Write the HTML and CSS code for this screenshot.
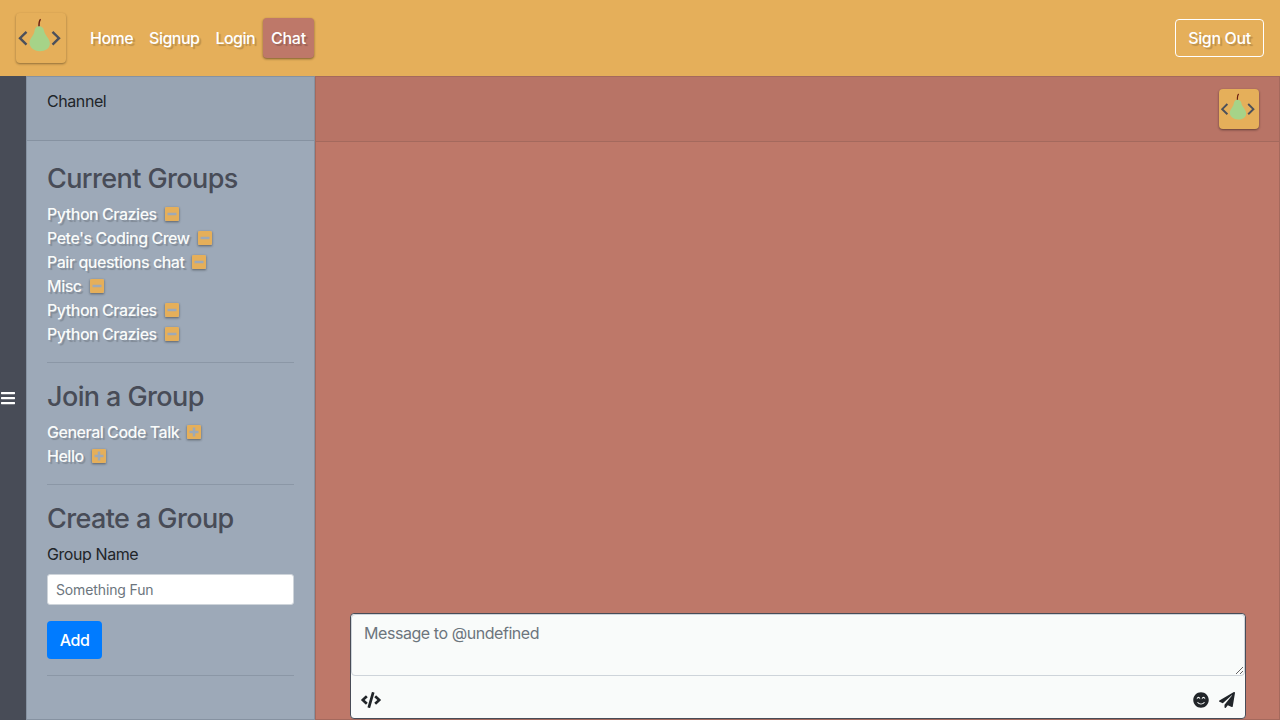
FILE: index.html
```html
<!DOCTYPE html>
<html lang="en">
<head>
<meta charset="utf-8">
<title>Pair Chat</title>
<link rel="stylesheet" href="styles.css">
</head>
<body>
<svg class="defs" aria-hidden="true">
  <symbol id="pear" viewBox="0 0 50 50">
    <path d="M23 13.8C22.9 10.600 23 7.600 24.600 6.200" fill="none" stroke="#6b1f12" stroke-width="1.500"/>
    <path d="M23.200 13.300C25.700 13.300 27.600 14.800 28.100 18C28.700 22.200 33.900 25.500 33.900 30.500C33.900 35.500 29.200 38.200 23.700 38.200C18.200 38.200 13.500 34.600 13.500 29.800C13.500 25.500 17.900 22.500 18.400 18.500C18.800 15.200 20.500 13.300 23.200 13.300Z" fill="#a6d388"/>
    <path d="M10.500 18.800L4 25.200L10.500 31.600M36.500 18.800L43 25.200L36.500 31.600" fill="none" stroke="#4c505b" stroke-width="2.400"/>
  </symbol>
  <symbol id="minus" viewBox="0 32 448 448"><path d="M400 32H48C21.500 32 0 53.500 0 80v352c0 26.500 21.500 48 48 48h352c26.500 0 48-21.500 48-48V80c0-26.500-21.500-48-48-48zM92 296c-6.600 0-12-5.400-12-12v-56c0-6.600 5.400-12 12-12h264c6.600 0 12 5.400 12 12v56c0 6.600-5.400 12-12 12H92z"/></symbol>
  <symbol id="plus" viewBox="0 32 448 448"><path d="M400 32H48C21.500 32 0 53.500 0 80v352c0 26.500 21.500 48 48 48h352c26.500 0 48-21.500 48-48V80c0-26.500-21.500-48-48-48zm-32 252c0 6.600-5.400 12-12 12h-92v92c0 6.600-5.400 12-12 12h-56c-6.600 0-12-5.400-12-12v-92H92c-6.600 0-12-5.400-12-12v-56c0-6.600 5.400-12 12-12h92v-92c0-6.600 5.400-12 12-12h56c6.600 0 12 5.400 12 12v92h92c6.600 0 12 5.400 12 12v56z"/></symbol>
</svg>
<header class="navbar">
  <svg class="brand"><use href="#pear"/></svg>
  <nav class="nav">
    <a class="nav-link">Home</a>
    <a class="nav-link">Signup</a>
    <a class="nav-link">Login</a>
    <a class="nav-link active">Chat</a>
  </nav>
  <button class="sign-out">Sign Out</button>
</header>
<main class="main">
  <aside class="rail">
    <svg class="bars" viewBox="0 0 448 512"><path d="M16 132h416c8.800 0 16-7.200 16-16V76c0-8.800-7.200-16-16-16H16C7.200 60 0 67.200 0 76v40c0 8.800 7.200 16 16 16zm0 160h416c8.800 0 16-7.200 16-16v-40c0-8.800-7.200-16-16-16H16c-8.800 0-16 7.200-16 16v40c0 8.800 7.200 16 16 16zm0 160h416c8.800 0 16-7.200 16-16v-40c0-8.800-7.200-16-16-16H16c-8.800 0-16 7.200-16 16v40c0 8.800 7.200 16 16 16z"/></svg>
  </aside>
  <section class="side">
    <div class="side-head">Channel</div>
    <div class="side-body">
      <h3 class="title">Current Groups</h3>
      <ul class="groups">
        <li class="group"><span class="name">Python Crazies</span><svg class="toggle"><use href="#minus"/></svg></li>
        <li class="group"><span class="name">Pete's Coding Crew</span><svg class="toggle"><use href="#minus"/></svg></li>
        <li class="group"><span class="name">Pair questions chat</span><svg class="toggle"><use href="#minus"/></svg></li>
        <li class="group"><span class="name">Misc</span><svg class="toggle"><use href="#minus"/></svg></li>
        <li class="group"><span class="name">Python Crazies</span><svg class="toggle"><use href="#minus"/></svg></li>
        <li class="group"><span class="name">Python Crazies</span><svg class="toggle"><use href="#minus"/></svg></li>
      </ul>
      <hr class="rule">
      <h3 class="title">Join a Group</h3>
      <ul class="groups">
        <li class="group"><span class="name">General Code Talk</span><svg class="toggle"><use href="#plus"/></svg></li>
        <li class="group"><span class="name">Hello</span><svg class="toggle"><use href="#plus"/></svg></li>
      </ul>
      <hr class="rule">
      <h3 class="title">Create a Group</h3>
      <label class="label" for="group">Group Name</label>
      <input class="field" id="group" placeholder="Something Fun">
      <button class="add">Add</button>
      <hr class="rule">
    </div>
  </section>
  <section class="chat">
    <div class="chat-head"><svg class="avatar"><use href="#pear"/></svg></div>
    <div class="messages"></div>
    <div class="composer">
      <textarea class="message" placeholder="Message to @undefined"></textarea>
      <div class="tools">
        <svg class="code" viewBox="0 0 640 512"><path d="M278.900 511.500l-61-17.700c-6.400-1.800-10-8.500-8.200-14.900L346.200 8.700c1.800-6.400 8.500-10 14.900-8.200l61 17.700c6.400 1.800 10 8.500 8.200 14.900L293.800 503.300c-1.900 6.400-8.500 10.100-14.900 8.200zm-114-112.200l43.500-46.400c4.600-4.900 4.300-12.700-.8-17.200L117 256l90.600-79.700c5.100-4.500 5.500-12.300.8-17.200l-43.500-46.400c-4.500-4.800-12.100-5.100-17-.5L3.800 247.200c-5.100 4.700-5.100 12.800 0 17.500l144.100 135.100c4.900 4.600 12.500 4.400 17-.5zm327.200.6l144.100-135.100c5.100-4.700 5.100-12.800 0-17.500L492.100 112.100c-4.800-4.500-12.400-4.300-17 .5L431.600 159c-4.600 4.900-4.300 12.700.8 17.200L523 256l-90.600 79.700c-5.100 4.500-5.500 12.300-.8 17.200l43.500 46.400c4.500 4.900 12.100 5.100 17 .6z"/></svg>
        <svg class="smile" viewBox="0 0 496 512"><path d="M248 8C111 8 0 119 0 256s111 248 248 248 248-111 248-248S385 8 248 8zM112 223.400c3.300-42.100 32.200-71.400 56-71.400s52.700 29.300 56 71.400c.7 8.600-10.800 11.900-14.900 4.500l-9.500-17c-7.700-13.700-19.200-21.600-31.500-21.600s-23.800 7.900-31.500 21.600l-9.500 17c-4.300 7.400-15.800 4-15.100-4.500zm250.800 122.800C334.300 380.400 292.500 400 248 400s-86.300-19.600-114.800-53.800c-13.500-16.300 11-36.700 24.600-20.500 22.400 26.900 55.200 42.200 90.200 42.200s67.800-15.400 90.200-42.200c13.600-16.200 38.100 4.200 24.600 20.500zm6.200-118.300l-9.500-17c-7.700-13.700-19.200-21.600-31.500-21.600s-23.800 7.900-31.500 21.600l-9.500 17c-4.100 7.300-15.600 4-14.900-4.500 3.300-42.100 32.200-71.400 56-71.400s52.700 29.300 56 71.400c.6 8.600-11 11.900-15.100 4.500z"/></svg>
        <svg class="plane" viewBox="0 0 512 512"><path d="M476 3.200L12.500 270.600c-18.100 10.400-15.800 35.600 2.200 43.200L121 358.400l287.300-253.200c5.500-4.900 13.300 2.600 8.600 8.300L176 407v80.500c0 23.600 28.500 32.900 42.500 15.800L282 426l124.600 52.200c14.200 6 30.400-2.900 33-18.200l72-432C515 7.800 493.300-6.800 476 3.200z"/></svg>
      </div>
    </div>
  </section>
</main>
</body>
</html>
```
FILE: styles.css
```css
* { box-sizing: border-box; }
body {
  margin: 0;
  height: 720px;
  overflow: hidden;
  display: flex;
  flex-direction: column;
  font: 16px/24px Inter, "Liberation Sans", sans-serif;
  letter-spacing: -0.42px;
  color: #212529;
}
.defs { display: none; }
.navbar {
  height: 76px;
  flex: none;
  display: flex;
  align-items: center;
  padding: 0 16px;
  background: #e5af5a;
}
.brand {
  width: 50px;
  height: 50px;
  border-radius: 4px;
  box-shadow: 0 1px 3px rgba(0,0,0,.14), 0 1px 2px rgba(0,0,0,.26);
}
.nav { display: flex; margin-left: 16px; }
.nav-link {
  padding: 8px;
  color: #fff;
  font-weight: 500;
  letter-spacing: -0.52px;
  text-shadow: 2px 2px 1px rgba(0,0,0,.18);
}
.active {
  letter-spacing: -0.3px;
  background: #be7869;
  border-radius: 4px;
  box-shadow: 0 1px 3px rgba(0,0,0,.2), 0 1px 2px rgba(0,0,0,.3);
}
.sign-out {
  margin-left: auto;
  width: 89px;
  height: 38px;
  padding: 0;
  background: transparent;
  border: 1px solid #fff;
  border-radius: 4px;
  color: #fff;
  font: inherit;
  font-weight: 500;
  letter-spacing: -0.37px;
  text-shadow: 2px 2px 1px rgba(0,0,0,.18);
}
.main { flex: 1; min-height: 0; display: flex; }
.rail {
  width: 26px;
  background: #484c57;
  display: flex;
  align-items: center;
  padding-left: 1px;
}
.bars { width: 14px; height: 16px; fill: #fff; }
.side {
  width: 289px;
  display: flex;
  flex-direction: column;
  background: #9da9b8;
  border: 1px solid #8692a1;
}
.side-head {
  height: 64px;
  flex: none;
  padding: 12px 20px;
  background: #98a4b3;
  border-bottom: 1px solid #8692a1;
}
.side-body { padding: 21px 20px 0; }
.title {
  margin: 0 0 6px;
  font-size: 27px;
  line-height: 34px;
  font-weight: 550;
  letter-spacing: -0.6px;
  color: #484c57;
}
.groups { margin: 0; padding: 0; list-style: none; }
.group { height: 24px; display: flex; align-items: center; gap: 8px; }
.name {
  color: #f9fbfa;
  font-weight: 500;
  letter-spacing: -0.47px;
  text-shadow: 2px 2px 1px rgba(0,0,0,.18);
}
.toggle {
  width: 14px;
  height: 14px;
  fill: #e5af5a;
  box-shadow: 0 1px 3px rgba(0,0,0,.16), 0 1px 2px rgba(0,0,0,.3);
}
.rule { margin: 16px 0 17px; border: 0; border-top: 1px solid #8b97a6; }
.label { display: block; margin-bottom: 8px; }
.field {
  display: block;
  width: 100%;
  height: 31px;
  padding: 4px 8px;
  border: 1px solid #ced4da;
  border-radius: 3px;
  background: #fff;
  font: 14px/21px Inter, sans-serif;
  letter-spacing: -0.13px;
}
.field::placeholder, .message::placeholder { color: #6c757d; opacity: 1; }
.add {
  display: block;
  width: 55px;
  height: 38px;
  margin-top: 16px;
  padding: 0;
  border: 0;
  border-radius: 4px;
  background: #007bff;
  color: #fff;
  font: inherit;
  font-weight: 500;
  letter-spacing: inherit;
}
.chat {
  flex: 1;
  display: flex;
  flex-direction: column;
  background: #be7869;
  border: 1px solid #a4695d;
}
.chat-head {
  height: 65px;
  flex: none;
  display: flex;
  justify-content: flex-end;
  padding: 12px 20px;
  background: #b87466;
  border-bottom: 1px solid #a4695d;
}
.avatar {
  width: 40px;
  height: 40px;
  border-radius: 4px;
  background: #e5af5a;
  box-shadow: 0 1px 3px rgba(0,0,0,.2), 0 1px 2px rgba(0,0,0,.3);
}
.messages { flex: 1; }
.composer {
  height: 106px;
  margin: 0 33px 0 34px;
  border: 1px solid #484c57;
  border-radius: 4px;
  background: #f9fbfa;
}
.message {
  display: block;
  width: 100%;
  height: 62px;
  padding: 6px 12px;
  border: 1px solid #ced4da;
  border-radius: 4px;
  background: #f9fbfa;
  font: inherit;
  letter-spacing: -0.44px;
  resize: vertical;
}
.tools { display: flex; align-items: center; padding: 16px 10px 0; fill: #212529; }
.code { width: 20px; height: 16px; }
.smile { width: 16px; height: 16px; margin-left: auto; }
.plane { width: 16px; height: 16px; margin-left: 10px; }
```
